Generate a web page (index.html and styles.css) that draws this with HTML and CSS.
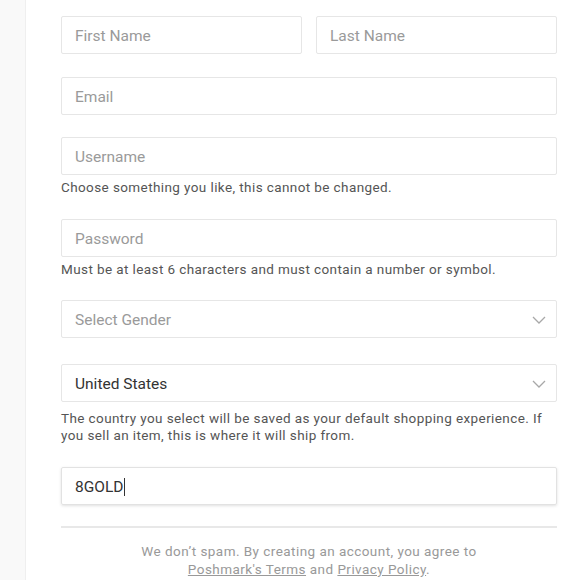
FILE: index.html
```html
<!DOCTYPE html>
<html>
<head>
<meta charset="utf-8">
<link rel="stylesheet" href="styles.css">
</head>
<body>
<div class="page">
  <div class="side"></div>
  <div class="main">
    <form class="form">
      <div class="row">
        <div class="field">First Name</div>
        <div class="field">Last Name</div>
      </div>
      <div class="field email">Email</div>
      <div class="group">
        <div class="field">Username</div>
        <p class="hint">Choose something you like, this cannot be changed.</p>
      </div>
      <div class="group">
        <div class="field">Password</div>
        <p class="hint">Must be at least 6 characters and must contain a number or symbol.</p>
      </div>
      <div class="field select">Select Gender
        <svg class="chev" viewBox="0 0 14 8" width="14" height="8"><path d="M1 1l6 6 6-6" fill="none" stroke="#a8a8a8" stroke-width="1.3"/></svg>
      </div>
      <div class="group country">
        <div class="field select filled">United States
          <svg class="chev" viewBox="0 0 14 8" width="14" height="8"><path d="M1 1l6 6 6-6" fill="none" stroke="#a8a8a8" stroke-width="1.3"/></svg>
        </div>
        <p class="hint two">The country you select will be saved as your default shopping experience. If you sell an item, this is where it will ship from.</p>
      </div>
      <div class="field filled focus">8GOLD<span class="caret"></span></div>
      <hr class="divider">
      <p class="legal">We don’t spam. By creating an account, you agree to<br><a href="#">Poshmark's Terms</a> and <a href="#">Privacy Policy</a>.</p>
    </form>
  </div>
</div>
</body>
</html>
```
FILE: styles.css
```css
html, body { margin: 0; padding: 0; background: #fff; }
body { font-family: Roboto, "Liberation Sans", sans-serif; }
.page { display: flex; min-height: 580px; }
.side { width: 25px; background: #f9f9f9; border-right: 1px solid #efefef; flex: none; }
.main { flex: 1; padding: 16px 0 0 35px; }
.form { width: 496px; display: flex; flex-direction: column; }
.row { display: flex; gap: 14px; margin-bottom: 23px; }
.row .field { flex: 1; margin-bottom: 0; }
.field {
  position: relative;
  box-sizing: border-box;
  height: 38px;
  border: 1px solid #e6e6e6;
  border-radius: 2px;
  padding: 1px 13px 0;
  display: flex;
  align-items: center;
  font-size: 15.5px;
  color: #9a9a9a;
  margin-bottom: 23px;
}
.email { margin-bottom: 22px; }
.group { display: flex; flex-direction: column; margin-bottom: 23px; }
.group .field { margin-bottom: 0; }
.hint { margin: 4px 0 0; font-size: 13.5px; line-height: 17px; color: #555; letter-spacing: 0.4px; }
.group + .select { margin-top: -1px; }
.hint.two { margin-top: 8px; }
.select { margin-bottom: 26px; }
.country { margin-bottom: 23px; }
.filled { color: #333; }
.chev { position: absolute; right: 10px; top: 15px; }
.focus { box-shadow: 0 1px 3px rgba(0,0,0,0.12); border-color: #e2e2e2; margin-bottom: 21px; }
.caret { display: inline-block; width: 1px; height: 18px; background: #333; margin-left: 1px; }
.divider { width: 100%; margin: 0 0 14px; border: 0; border-top: 2px solid #e8e8e8; }
.legal { margin: 0; text-align: center; font-size: 13.5px; line-height: 18px; color: #999; letter-spacing: 0.45px; }
.legal a { color: #999; }
```
